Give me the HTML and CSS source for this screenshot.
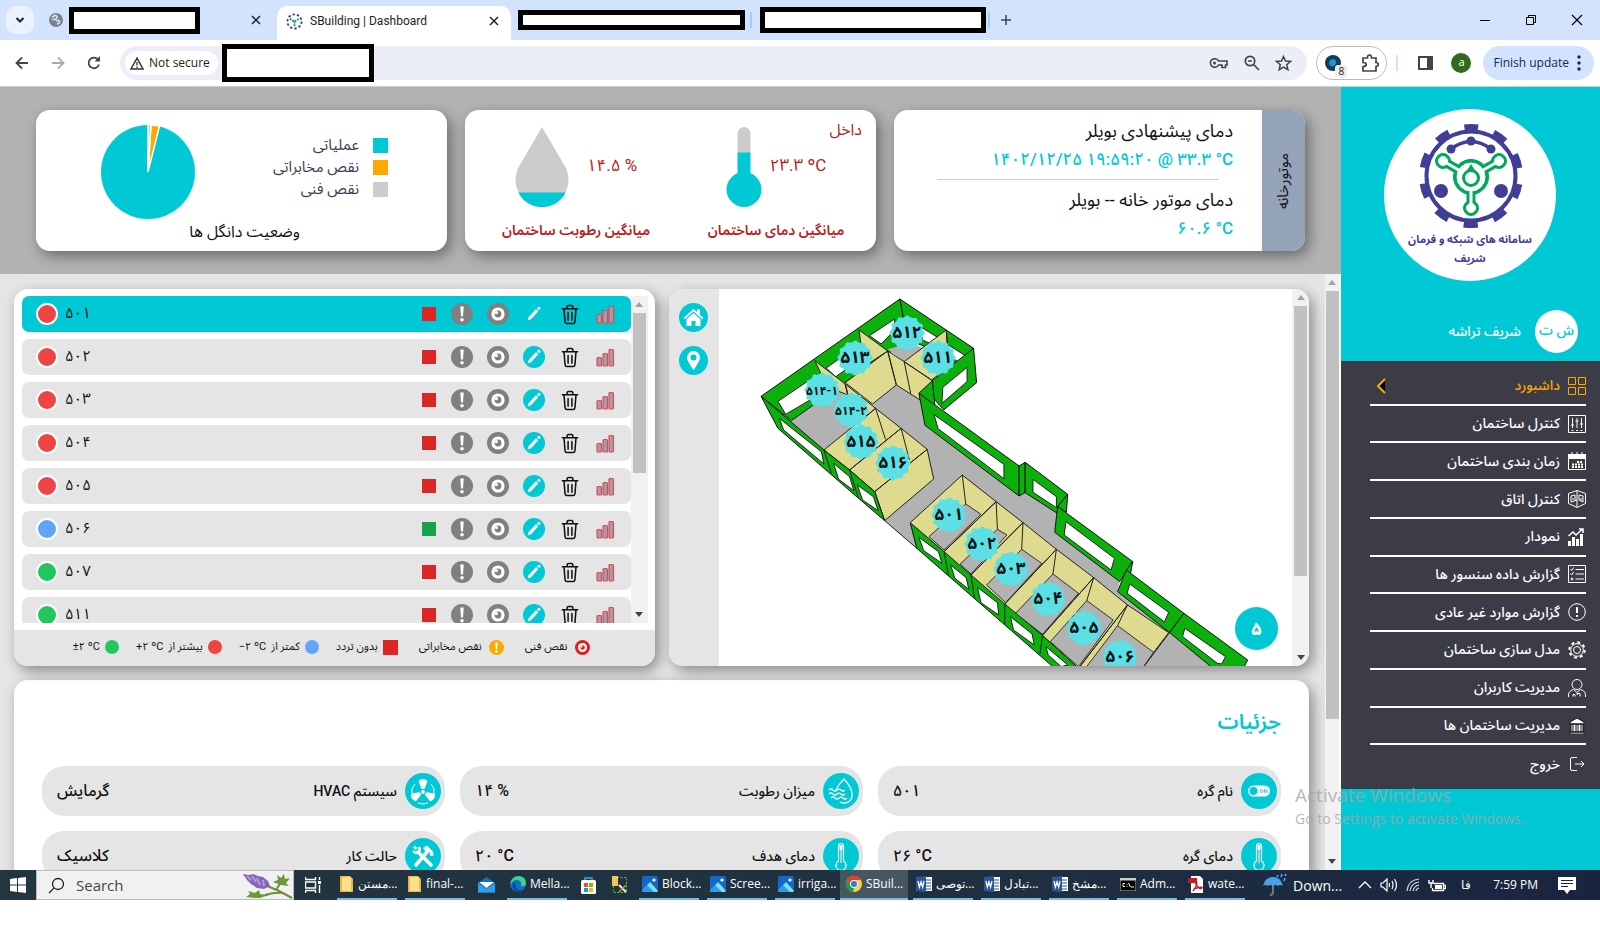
FILE: index.html
```html
<!DOCTYPE html>
<html lang="fa">
<head>
  <meta charset="UTF-8">
  <meta name="viewport" content="width=device-width, initial-scale=1.0">
  <title>SBuilding | Dashboard</title>
  <link rel="stylesheet" href="styles.css">
</head>
<body>
  <svg class="sprite" aria-hidden="true">
    <symbol id="i-close" viewBox="0 0 12 12"><path d="M2 2l8 8M10 2l-8 8" fill="none" stroke="currentColor" stroke-width="1.5"/></symbol>
    <symbol id="i-alert" viewBox="0 0 22 22"><circle cx="11" cy="11" r="11" fill="currentColor"/><path d="M9.300 3.500h3.400l-.7 10h-2z" fill="#fff"/><circle cx="11" cy="16.700" r="1.800" fill="#fff"/></symbol>
    <symbol id="i-eye" viewBox="0 0 22 22"><circle cx="11" cy="11" r="11" fill="currentColor"/><circle cx="11" cy="11" r="6.600" fill="#fff"/><circle cx="11" cy="11" r="3.400" fill="currentColor"/><circle cx="9.400" cy="9.600" r="1.600" fill="#fff"/></symbol>
    <symbol id="i-pencil" viewBox="0 0 22 22"><circle cx="11" cy="11" r="11" fill="#00c8d4"/><path d="M4.600 17.600l1-3.500 7.500-8 2.200 2.200-7.300 8zM14 5.200l1.200-1.200q.8-.6 1.600.1l.5.5q.5.7 0 1.400l-1.100 1.300z" fill="#fff"/></symbol>
    <symbol id="i-trash" viewBox="0 0 18 22"><path d="M1 5h16M6 5V3q0-1.500 1.500-1.500h3Q12 1.500 12 3v2M2.700 5l1.100 13.500q.2 2 2 2h6.400q1.800 0 2-2L15.300 5M7 9v8M11 9v8" fill="none" stroke="#111" stroke-width="1.600" stroke-linecap="round"/></symbol>
    <symbol id="i-bars" viewBox="0 0 19 19"><g fill="#94a3b8" stroke="#ef4444" stroke-width="1.200"><rect x="1" y="9.500" width="4.500" height="8.500" rx="1"/><rect x="7" y="5.500" width="4.500" height="12.500" rx="1"/><rect x="13" y="1.500" width="4.500" height="16.500" rx="1"/></g></symbol>
    <symbol id="i-up" viewBox="0 0 8 5"><path d="M0 5l4-5 4 5z" fill="currentColor"/></symbol>
    <symbol id="i-down" viewBox="0 0 8 5"><path d="M0 0l4 5 4-5z" fill="currentColor"/></symbol>
    <symbol id="i-folder" viewBox="0 0 14 18"><path d="M0 1h10l3 3v13H0z" fill="#e8b945"/><path d="M2 2h9v13l2 1H2z" fill="#ffe08a"/></symbol>
    <symbol id="i-photo" viewBox="0 0 16 16"><rect width="16" height="16" rx="2" fill="#1468c7"/><path d="M0 15l8-9 8 9-1 1H1z" fill="#7fe0f5"/><path d="M0 14l5-5 7 7H1z" fill="#2f9be8"/><circle cx="12" cy="4" r="1.600" fill="#fff"/></symbol>
    <symbol id="i-word" viewBox="0 0 16 16"><rect x="7" y="1" width="9" height="14" fill="#fff"/><path d="M10 4h5M10 7h5M10 10h5M10 13h5" stroke="#2b579a"/><path d="M0 1l10-1v16L0 15z" fill="#2b579a"/><path d="M2 5l1.400 6L5 6l1.600 5L8 5" fill="none" stroke="#fff" stroke-width="1.300"/></symbol>
    <symbol id="i-therm" viewBox="0 0 36 36"><path d="M15.500 23V8q0-2.500 2.500-2.500T20.500 8v15a5 5 0 1 1-5 0z" fill="none" stroke="#fff" stroke-width="1.200"/><path d="M16.500 7h3v5h-3z" fill="#fff"/><path d="M18 12v13" stroke="#fff" stroke-width="1"/></symbol>
  </svg>

  <!-- Browser -->
  <header class="browser">
    <div class="tab-strip">
      <button class="tab-search" aria-label="Search tabs"><svg width="10" height="8" viewBox="0 0 10 8"><path d="M1.500 2L5 5.500 8.500 2" fill="none" stroke="#222" stroke-width="2"/></svg></button>
      <div class="tab tab-first">
        <svg width="14" height="14" viewBox="0 0 14 14"><circle cx="7" cy="7" r="7" fill="#7d8086"/><path d="M3 4.500q3-3 4.500-1.500T6 6.500Q3.500 6.500 3.500 7M8 11q3-.5 2.500-2.500T7 8" fill="none" stroke="#d3e3fd" stroke-width="1.700"/></svg>
        <span class="mask mask-a"></span>
        <button class="tab-close" aria-label="Close tab"><svg width="12" height="12"><use href="#i-close"/></svg></button>
      </div>
      <div class="tab tab-active">
        <svg width="17" height="17" viewBox="0 0 18 18"><circle cx="9" cy="9" r="7.500" fill="none" stroke="#3f3f97" stroke-width="2" stroke-dasharray="2.500 2.210"/><path d="M4 6l5 3 5-3M9 9v5" fill="none" stroke="#00a859" stroke-width="2" stroke-dasharray="2 1"/></svg>
        <span class="tab-title">SBuilding | Dashboard</span>
        <button class="tab-close" aria-label="Close tab"><svg width="12" height="12"><use href="#i-close"/></svg></button>
      </div>
      <span class="mask mask-b"></span>
      <span class="tab-line"></span>
      <span class="mask mask-c"></span>
      <span class="tab-line"></span>
      <button class="new-tab" aria-label="New tab"><svg width="12" height="12" viewBox="0 0 12 12"><path d="M6 1v10M1 6h10" stroke="#444" stroke-width="1.500"/></svg></button>
      <div class="window-controls">
        <button aria-label="Minimize"><svg width="12" height="12" viewBox="0 0 12 12"><path d="M1 6.500h10" stroke="#000"/></svg></button>
        <button aria-label="Restore"><svg width="12" height="12" viewBox="0 0 12 12"><path d="M1.500 3.500h7v7h-7zM3.500 3.500v-2h7v7h-2" fill="none" stroke="#000"/></svg></button>
        <button aria-label="Close"><svg width="12" height="12" viewBox="0 0 12 12"><path d="M1 1l10 10M11 1L1 11" stroke="#000" stroke-width="1.200"/></svg></button>
      </div>
    </div>
    <div class="toolbar">
      <button aria-label="Back"><svg width="14" height="14" viewBox="0 0 14 14"><path d="M13 7H2M7 1.500L1.500 7 7 12.500" fill="none" stroke="#444" stroke-width="1.800"/></svg></button>
      <button aria-label="Forward"><svg width="14" height="14" viewBox="0 0 14 14"><path d="M1 7h11M7 1.500L12.500 7 7 12.500" fill="none" stroke="#aaa" stroke-width="1.800"/></svg></button>
      <button aria-label="Reload"><svg width="14" height="14" viewBox="0 0 14 14"><path d="M12 8.500A5.300 5.300 0 1 1 11 3.500" fill="none" stroke="#444" stroke-width="1.800"/><path d="M13 0v5.500H7.500z" fill="#444"/></svg></button>
      <div class="omnibox">
        <span class="secure"><svg width="14" height="13" viewBox="0 0 14 13"><path d="M7 1.200L13 12H1z" fill="none" stroke="#333" stroke-width="1.500"/><path d="M7 5v3.500M7 9.500V11" stroke="#333" stroke-width="1.300"/></svg>Not secure</span>
        <span class="mask mask-d"></span>
        <div class="omni-icons">
          <svg width="20" height="14" viewBox="0 0 20 14"><path d="M9.500 5H18v4h-1.500v2.500H13V9H9.500a4.300 4.300 0 1 1 0-4z" fill="none" stroke="#444" stroke-width="1.600"/><circle cx="5.500" cy="7" r="1.500" fill="#444"/></svg>
          <svg width="16" height="16" viewBox="0 0 16 16"><circle cx="6" cy="6" r="4.700" fill="none" stroke="#444" stroke-width="1.700"/><path d="M9.500 9.500L15 15M4 6h4" stroke="#444" stroke-width="1.700"/></svg>
          <svg width="17" height="16" viewBox="0 0 17 16"><path d="M8.500 1.500l2 4.600 5 .4-3.800 3.300 1.200 4.900-4.400-2.600-4.400 2.600 1.200-4.900L1.500 6.500l5-.4z" fill="none" stroke="#444" stroke-width="1.500"/></svg>
        </div>
      </div>
      <div class="extensions">
        <span class="ext-globe"><svg width="16" height="16" viewBox="0 0 16 16"><circle cx="8" cy="8" r="8" fill="#123a5e"/><path d="M4 8q0-4 5-4 3 2 2 5-3 4-5 2-2 0-2-3z" fill="#1f8fd0"/></svg><span class="ext-count">8</span></span>
        <svg width="18" height="18" viewBox="0 0 18 18"><path d="M2 4h4.500q-.2-3 2-3t2 3H15v4.500q2.300.2 2.300 2T15 12.500V17H2v-4.500q3.200 0 3.200-2T2 8.500z" fill="none" stroke="#444" stroke-width="1.700"/></svg>
      </div>
      <span class="tool-line"></span>
      <button class="side-btn" aria-label="Side panel"><svg width="15" height="14" viewBox="0 0 15 14"><rect x="1" y="1" width="13" height="12" fill="none" stroke="#444" stroke-width="2"/><path d="M9 1h5v12H9z" fill="#444"/></svg></button>
      <span class="avatar">a</span>
      <button class="finish">Finish update<svg width="4" height="16" viewBox="0 0 4 16"><g fill="#0b2a5c"><circle cx="2" cy="2" r="1.700"/><circle cx="2" cy="8" r="1.700"/><circle cx="2" cy="14" r="1.700"/></g></svg></button>
    </div>
  </header>

  <div class="app">
    <main class="main">
      <!-- Summary cards -->
      <section class="summary">
        <div class="summary-card pie-card" dir="rtl">
          <div class="pie-row">
            <ul class="pie-legend">
              <li><span class="swatch cyan"></span>عملیاتی</li>
              <li><span class="swatch amber"></span>نقص مخابراتی</li>
              <li><span class="swatch silver"></span>نقص فنی</li>
            </ul>
            <svg width="94" height="94" viewBox="-47 -47 94 94"><circle r="47" fill="#00c8d4"/><path d="M0 0L3-47 11.500-46z" fill="#ffa800" stroke="#fff" stroke-width="1.500"/><path d="M0 0V-48h3z" fill="#ccc" stroke="#fff" stroke-width="1.500"/></svg>
          </div>
          <p class="pie-caption">وضعیت دانگل ها</p>
        </div>

        <div class="summary-card average-card" dir="rtl">
          <div class="inside">داخل</div>
          <div class="averages">
            <div class="average">
              <div class="gauge">
                <bdi dir="ltr">۲۳.۳ ºC</bdi>
                <svg width="36" height="80" viewBox="0 0 36 80"><path d="M11.500 26V6.500a6.500 6.500 0 0 1 13 0V26z" fill="#ccc"/><path d="M11.500 25.500h13V50h-13z" fill="#00c8d4"/><circle cx="18" cy="62.500" r="17.500" fill="#00c8d4"/></svg>
              </div>
              <p>میانگین دمای ساختمان</p>
            </div>
            <div class="average">
              <div class="gauge gauge-drop">
                <bdi dir="ltr">۱۴.۵ %</bdi>
                <svg width="54" height="80" viewBox="0 0 54 80"><path d="M27 0L4 39.500A26.500 26.500 0 1 0 50 39.500z" fill="#ccc"/><path d="M3.300 65.500h47.400a26.500 26.500 0 0 1-47.400 0z" fill="#00c8d4"/></svg>
              </div>
              <p>میانگین رطوبت ساختمان</p>
            </div>
          </div>
        </div>

        <div class="summary-card boiler-card" dir="rtl">
          <div class="boiler-tab"><span>موتورخانه</span></div>
          <div class="boiler-body">
            <p>دمای پیشنهادی بویلر</p>
            <p class="reading"><bdi dir="ltr">۱۴۰۲/۱۲/۲۵ ۱۹:۵۹:۲۰ @ ۳۳.۳ °C</bdi></p>
            <hr>
            <p>دمای موتور خانه -- بویلر</p>
            <p class="reading"><bdi dir="ltr">۶۰.۶ °C</bdi></p>
          </div>
        </div>
      </section>

      <div class="content">
        <div class="content-body">
          <div class="panels">
            <section class="panel nodes-panel">
              <div class="nodes-scroll">
                <ul class="nodes" id="nodes"></ul>
                <div class="scrollbar">
                  <svg class="faded" width="8" height="5"><use href="#i-up"/></svg>
                  <div class="track"><div class="thumb nodes-thumb"></div></div>
                  <svg width="8" height="5"><use href="#i-down"/></svg>
                </div>
              </div>
              <div class="nodes-legend" dir="rtl">
                <span class="key-wide"><svg class="red" width="15" height="15" viewBox="0 0 22 22"><use href="#i-eye"/></svg>نقص فنی</span>
                <span class="key-wide"><svg class="orange" width="15" height="15" viewBox="0 0 22 22"><use href="#i-alert"/></svg>نقص مخابراتی</span>
                <span><i class="key-square"></i>بدون تردد</span>
                <span><i class="key-dot blue"></i>کمتر از <bdi dir="ltr">−۲ ºC</bdi></span>
                <span><i class="key-dot hot"></i>بیشتر از <bdi dir="ltr">+۲ ºC</bdi></span>
                <span><i class="key-dot green"></i><bdi dir="ltr">±۲ ºC</bdi></span>
              </div>
            </section>

            <section class="panel map-panel">
              <div class="map-tools">
                <button aria-label="Home"><svg width="29" height="29" viewBox="0 0 29 29"><circle cx="14.500" cy="14.500" r="14.500" fill="#00c8d4"/><path d="M4.500 15L14.500 6l3.500 3V6.500h3V12l3.500 3-1.300 1.300L14.500 8.500 5.800 16.300z" fill="#fff"/><path d="M7.500 16.300l7-6.200 7 6.200V23H16.500v-5h-4v5h-5z" fill="#fff"/></svg></button>
                <button aria-label="Location"><svg width="29" height="29" viewBox="0 0 29 29"><circle cx="14.500" cy="14.500" r="14.500" fill="#00c8d4"/><path fill-rule="evenodd" d="M14.500 24Q8 15 8 11.500a6.500 6.500 0 0 1 13 0Q21 15 14.500 24zm0-9.500a3 3 0 1 0 0-6 3 3 0 0 0 0 6z" fill="#fff"/></svg></button>
              </div>
              <div class="map-view">
                <svg class="map" width="573" height="377" viewBox="0 0 573 377">
                  <g class="plan" transform="translate(-59 -9) scale(.4337 .3333)">
                    <path class="floor" d="M300 425L400 318 433 312 490 372 545 315 600 355 611 436 828 648 842 638 916 695 910 757 1060 905 1055 935 1175 1058 1275 1160H915L592 805 518 722 378 510z"/>
                    <path class="ext" d="M553 57L233 349 303 422 440 295 575 180 561 110z"/>
                    <path class="ext" d="M553 57L723 205 690 255 620 205 575 180 561 110z"/>
                    <path class="pane" d="M272 364L362 285 385 330 290 403zM383 264L445 208 455 245 405 290zM483 167L541 117V150L510 192zM600 140L654 183 640 200 605 180zM665 195L705 228 690 248 665 225z"/>
                    <path class="floor" d="M525 208L575 190 610 205 563 245z"/>
                    <path class="room" d="M459 150L525 213 470 260zM525 213L545 315 490 372 427 308zM525 213L563 245 628 302 600 340V360L545 315zM660 150L563 245 626 300 665 262zM357 242L427 312 433 345 385 320z"/>
                    <path class="room" d="M427 312L497 385 470 415 433 345zM497 385L378 510 437 570 556 445zM556 445L437 570 495 635 616 508zM616 508L631 597 518 722 495 635z"/>
                    <path class="edge" d="M563 245L578 340M660 150L663 190M497 385L520 478M556 445L575 540M427 312L433 340"/>
                    <path class="ext" d="M723 205L730 308 654 390 628 350V302z"/>
                    <path class="pane" d="M652 322L708 262V305L650 370z"/>
                    <path class="ext" d="M233 349L378 510 437 570 495 635 518 722 455 652 272 445z"/>
                    <path class="edge" d="M378 510L395 580M437 570L457 652"/>
                    <path class="pane" d="M275 415L372 515 378 552 285 450zM400 550L437 590 447 632 412 598zM455 615L492 650 503 692 467 660z"/>
                    <path class="ext" d="M597 340L628 302 634 378z"/>
                    <path class="ext" d="M597 340L828 558V648L611 436z"/>
                    <path class="ext" d="M828 558L842 547V638L828 648z"/>
                    <path class="ext" d="M842 547L940 643 917 680 916 700 842 638z"/>
                    <path class="ext" d="M940 643L937 697 917 680z"/>
                    <path class="ext" d="M917 680L1090 845 1060 905 910 757z"/>
                    <path class="ext" d="M1075 870L1090 845 1085 880z"/>
                    <path class="ext" d="M1075 870L1208 1000 1175 1058 1055 935z"/>
                    <path class="ext" d="M1208 1000L1355 1140 1345 1165H1275L1175 1058z"/>
                    <path class="pane" d="M632 404L793 553V596L641 446zM860 598L914 650V683L860 637zM936 725L1048 835 1040 870 932 765zM1083 912L1173 997 1163 1026 1077 940zM1210 1045L1304 1130 1295 1152 1285 1150 1205 1070z"/>
                    <path class="ext" d="M577 728L882 1066 965 1165H910L592 805z"/>
                    <path class="edge" d="M655 815L665 887M717 885L725 954M795 972V1032M882 1066L876 1122"/>
                    <path class="pane" d="M597 772L642 815 650 850 608 812zM670 855L706 893 712 928 680 895zM732 922L778 968 781 1005 740 968zM808 1010L858 1062 863 1095 815 1050zM890 1100L940 1155 925 1160 895 1125z"/>
                    <path class="room" d="M697 585L577 728 655 815 775 665zM775 665L655 815 717 885 837 728zM837 728L717 885 795 972 914 808zM914 808L795 972 882 1066 1000 893zM1000 893L882 1066 965 1165 1078 975zM1078 975L965 1165H1110L1173 1058z"/>
                    <path class="tile" d="M705 672L740 703 655 810 620 770zM778 748L800 765 717 882 692 852zM834 808L880 850 797 968 753 915zM906 882L965 940 882 1063 820 1000zM984 962L1045 1020 965 1160 900 1085zM1055 1037L1138 1117 1110 1170H978z"/>
                    <path class="edge" d="M697 585L705 672M775 665L778 748M837 728L834 808M914 808L906 882M1000 893L984 962M1078 975L1055 1037M1208 1000L1110 1170M518 722L592 805"/>
                  </g>
                  <g id="badges"></g>
                </svg>
                <button class="floor-btn">۵</button>
              </div>
              <div class="scrollbar">
                <svg class="faded" width="8" height="5"><use href="#i-up"/></svg>
                <div class="track"><div class="thumb map-thumb"></div></div>
                <svg width="8" height="5"><use href="#i-down"/></svg>
              </div>
            </section>
          </div>

          <section class="details" dir="rtl">
            <h2>جزئیات</h2>
            <dl class="detail-grid">
              <div class="detail">
                <svg width="36" height="36" viewBox="0 0 36 36"><circle cx="18" cy="18" r="18" fill="#00c8d4"/><rect x="7" y="12.500" width="22" height="11" rx="5.500" fill="#fff"/><circle cx="12.500" cy="18" r="4" fill="#00c8d4"/><circle cx="20.500" cy="18" r="1.500" fill="none" stroke="#00c8d4" stroke-width=".8"/><path d="M23.500 19.800v-3.500l2.500 3.500v-3.500" fill="none" stroke="#00c8d4" stroke-width=".8"/></svg>
                <dt>نام گره</dt><dd><bdi>۵۰۱</bdi></dd>
              </div>
              <div class="detail">
                <svg width="36" height="36" viewBox="0 0 36 36"><circle cx="18" cy="18" r="18" fill="#00c8d4"/><path d="M13 17Q15 12 21 6q8 9 8 15a8 8 0 0 1-12 8M6 17q2-2 4 0t4 0 4 0 4 0M6 21q2-2 4 0t4 0 4 0 4 0M8 25q2-2 4 0t4 0 4 0 4 0" fill="none" stroke="#fff" stroke-width="1.200"/></svg>
                <dt>میزان رطوبت</dt><dd><bdi dir="ltr">۱۴ %</bdi></dd>
              </div>
              <div class="detail">
                <svg width="36" height="36" viewBox="0 0 36 36"><circle cx="18" cy="18" r="18" fill="#00c8d4"/><g fill="#fff"><circle cx="18" cy="19" r="2"/><path id="blade" d="M16.500 16l-3-8q4.500-4 9 0l-3 8z"/><use href="#blade" transform="rotate(120 18 19)"/><use href="#blade" transform="rotate(240 18 19)"/></g><path d="M26 11q4 4 3 9M10 11q-4 4-3 9M13 30q5 2 10 0" fill="none" stroke="#fff"/></svg>
                <dt>سیستم HVAC</dt><dd>گرمایش</dd>
              </div>
              <div class="detail">
                <svg width="36" height="36"><circle cx="18" cy="18" r="18" fill="#00c8d4"/><use href="#i-therm"/></svg>
                <dt>دمای گره</dt><dd><bdi dir="ltr">۲۶ °C</bdi></dd>
              </div>
              <div class="detail">
                <svg width="36" height="36"><circle cx="18" cy="18" r="18" fill="#00c8d4"/><use href="#i-therm"/></svg>
                <dt>دمای هدف</dt><dd><bdi dir="ltr">۲۰ °C</bdi></dd>
              </div>
              <div class="detail">
                <svg width="36" height="36" viewBox="0 0 36 36"><circle cx="18" cy="18" r="18" fill="#00c8d4"/><path d="M13 14L26 27M11 27L22 14" stroke="#fff" stroke-width="3.500" stroke-linecap="round"/><path d="M18 10l4-2.500 6 6 .5 4-3 .5-1-4-3 .5z" fill="#fff"/><path d="M9 8.500l2.500 2.500M14 9q1.500 4-1 5.500T8 13" fill="none" stroke="#fff" stroke-width="2.500"/></svg>
                <dt>حالت کار</dt><dd>کلاسیک</dd>
              </div>
            </dl>
          </section>
        </div>
        <div class="scrollbar page-scroll">
          <svg class="faded" width="8" height="5"><use href="#i-up"/></svg>
          <div class="track"><div class="thumb page-thumb"></div></div>
          <svg width="8" height="5"><use href="#i-down"/></svg>
        </div>
      </div>
    </main>

    <!-- Sidebar -->
    <aside class="sidebar" dir="rtl">
      <div class="logo">
        <svg width="108" height="106" viewBox="-55 -52 108 106">
          <g fill="none" stroke="#3f3f97">
            <circle r="44.500" stroke-width="4"/>
            <circle r="48" stroke-width="8" stroke-dasharray="14 16.160" stroke-dashoffset="7" transform="rotate(-90)"/>
            <path d="M-20-27Q0-42 20-27" stroke-width="3.500"/>
          </g>
          <g fill="#3f3f97"><circle cx="-20" cy="-27" r="4.500"/><circle cy="-35" r="4.500"/><circle cx="20" cy="-27" r="4.500"/><circle cx="-30" cy="15" r="7"/><circle cx="30" cy="15" r="7"/></g>
          <g fill="#00a859" stroke="#00a859"><path d="M0 1L-28-15M0 1L28-15M0 1V32" stroke-width="9"/><circle cy="1" r="17.500"/><circle cx="-28" cy="-15" r="7.500"/><circle cx="28" cy="-15" r="7.500"/><circle cy="32" r="7.500"/></g>
          <g fill="#fff" stroke="#fff"><path d="M0 1L-28-15M0 1L28-15M0 1V32" stroke-width="3"/><circle cy="1" r="14"/><circle cx="-28" cy="-15" r="4.500"/><circle cx="28" cy="-15" r="4.500"/><circle cy="32" r="4.500"/></g>
          <circle cy="2" r="7.500" fill="none" stroke="#00a859" stroke-width="3"/><path d="M0-12L-5-4H5z" fill="#00a859"/>
        </svg>
        <strong>سامانه های شبکه و فرمان</strong>
        <strong>شریف</strong>
      </div>
      <div class="profile">
        <span class="initials">ش ت</span>
        <span>شریف تراشه</span>
      </div>
      <nav class="menu">
        <a href="#" class="active"><svg width="18" height="18" viewBox="0 0 18 18"><path d="M.5.500h7v7h-7zM10.500.500h7v7h-7zM.5 10.500h7v7h-7zM10.500 10.500h7v7h-7z"/></svg>داشبورد<svg class="caret" width="9" height="16" viewBox="0 0 9 16"><path d="M8 1L1 8l7 7z" fill="#000" stroke="none"/><path d="M8 1L1 8l7 7" stroke-width="2"/></svg></a>
        <a href="#"><svg width="18" height="18" viewBox="0 0 18 18"><path d="M.5.500h17v17H.5zM4.500 3v10M9 3v10M13.500 3v10M3 10h3M7.500 6h3M12 9h3M3.500 15.500h2M8 15.500h2M12.500 15.500h2"/></svg>کنترل ساختمان</a>
        <a href="#"><svg width="18" height="18" viewBox="0 0 18 18"><path d="M.5 2.500h17v15H.5zM4 0v4M9 0v4M14 0v4"/><path d="M.5 2.500h17v4H.5z" fill="#fff"/><path d="M4 15h11M4 12.500h11M9 10h6" stroke-width="2" stroke-dasharray="2 1"/></svg>زمان بندی ساختمان</a>
        <a href="#"><svg width="18" height="18" viewBox="0 0 18 18"><path d="M9 .5l8.500 3v10L9 17.500l-8.500-4v-10zM9 10v7M9 10l-6 2V6l4-1v5.500M11 10V5l4 1v6l-4-2M9 .5V10M5 8v2M13 8v3"/></svg>کنترل اتاق</a>
        <a href="#"><svg width="18" height="18" viewBox="0 0 18 18"><path d="M0 13h3v5H0zM4 9h3v9H4zM8 11h3v7H8zM12 6h3v12h-3z" fill="#fff" stroke="none"/><path d="M.5 8L5 4l3 3 6.500-6M11 1h4v4" stroke-width="1.500"/></svg>نمودار</a>
        <a href="#"><svg width="18" height="18" viewBox="0 0 18 18"><path d="M.5.500h17v17H.5zM2.500 4l1.200 1.500 2-3M2.500 8.500L3.700 10l2-3M7.500 4.500H16M7.500 9H16M7.500 14H16"/><circle cx="4" cy="14" r="1"/></svg>گزارش داده سنسور ها</a>
        <a href="#"><svg width="18" height="18" viewBox="0 0 18 18"><circle cx="9" cy="9" r="8.300"/><path d="M9 4v6M9 12v2" stroke-width="2"/></svg>گزارش موارد غیر عادی</a>
        <a href="#"><svg width="18" height="18" viewBox="0 0 18 18"><circle cx="9" cy="9" r="3.500"/><circle cx="9" cy="9" r="6.300"/><circle cx="9" cy="9" r="7.700" stroke-width="2" stroke-dasharray="3 3.050"/></svg>مدل سازی ساختمان</a>
        <a href="#"><svg width="18" height="18" viewBox="0 0 18 18"><circle cx="9" cy="5.500" r="5"/><path d="M.5 18v-2q0-4 5-5.500l3.500 3 3.500-3q5 1.500 5 5.500v2M5 17.500v-2h2v2M9 16v-1.500h3v3"/></svg>مدیریت کاربران</a>
        <a href="#"><svg width="18" height="18" viewBox="0 0 18 18"><path d="M2 6l7-4 7 4v2H2zM2 16h14v2H2zM3 8h12v8H3z" fill="#fff" stroke="#111"/><path d="M5 8v8M8 8v8M10 8v8M13 8v8" stroke="#111"/></svg>مدیریت ساختمان ها</a>
        <a href="#"><svg width="18" height="18" viewBox="0 0 18 18"><path d="M9 2.500H4q-1.500 0-1.500 1.500v10q0 1.500 1.500 1.500h5M7 9h9M13 6l3 3-3 3"/></svg>خروج</a>
      </nav>
    </aside>

    <div class="watermark"><p>Activate Windows</p><span>Go to Settings to activate Windows.</span></div>
  </div>

  <!-- Taskbar -->
  <footer class="taskbar">
    <button class="start" aria-label="Start"><svg width="16" height="16" viewBox="0 0 16 16"><path d="M0 2l7-1v6.500H0zM8 1l8-1v7.500H8zM0 8.500h7V15l-7-1zM8 8.500h8V16l-8-1z" fill="#fff"/></svg></button>
    <label class="search"><svg width="17" height="17" viewBox="0 0 17 17"><circle cx="10" cy="7" r="5.500" fill="none" stroke="#222" stroke-width="1.300"/><path d="M6 11l-5 5" stroke="#222" stroke-width="1.300"/></svg>
      <input type="text" placeholder="Search" aria-label="Search">
      <svg width="50" height="27" viewBox="0 0 50 27"><path d="M22 13l14 6 13 7M22 23q10-3 18-2M33 18l5-8" fill="none" stroke="#6b8f3a" stroke-width="2"/><path d="M0 2l6 1 4-1 5 2 5 1 5 4 2 5-6 3-7-1-6-4-4-4z" fill="#8864b8"/><path d="M4 4l4 4M9 4l4 6M14 6l3 7M20 8l1 6" stroke="#b69bd8" stroke-width="2"/><path d="M38 13l-8-3 5-2-1-5 4 3 3-4 1 5 5-1-4 5 3 3zM12 26l-9-1 4-3-2-3 7 2 4-3 1 4 9 1-9 3z" fill="#6a9a35"/></svg>
    </label>
    <button class="task-icon view" aria-label="Task view"><svg width="17" height="16" viewBox="0 0 17 16"><path d="M.5 0v2.500h10V0M.5 16v-2.500h10V16M.5 5h10v6H.5zM14.500 0v3M14.500 8v8" fill="none" stroke="#fff" stroke-width="1.400"/><path d="M13 4h3v3h-3z" fill="#fff"/></svg></button>
    <button class="task"><svg width="14" height="18"><use href="#i-folder"/></svg><span>مستن...</span></button>
    <button class="task"><svg width="14" height="18"><use href="#i-folder"/></svg><span>final-...</span></button>
    <button class="task-icon" aria-label="Mail"><svg width="17" height="16" viewBox="0 0 17 16"><path d="M0 6l8.500-6L17 6v9.500H0z" fill="#1271c4"/><path d="M1 5h15l-7.500 6z" fill="#fff"/><path d="M0 6l8.500 6L17 6v9.500H0z" fill="#2ea0ea"/></svg></button>
    <button class="task"><svg width="16" height="16" viewBox="0 0 16 16"><circle cx="8" cy="8" r="8" fill="#1170c0"/><path d="M1 5Q4 0 9 0q7 1 7 7 0 4-5 3 1-6-4-6-4 0-6 4z" fill="#42cf8b"/><path d="M6 8q-1 5 4 6l4-1q-4 5-9 2-5-5-1-9z" fill="#0c4d9e"/></svg><span>Mella...</span></button>
    <button class="task-icon" aria-label="Store"><svg width="15" height="17" viewBox="0 0 15 17"><path d="M4 4V1h7v3" fill="none" stroke="#35a7e8" stroke-width="1.500"/><rect y="3" width="15" height="14" rx="1.500" fill="#fff"/><path d="M3 6h4v4H3z" fill="#f25022"/><path d="M8 6h4v4H8z" fill="#7fba00"/><path d="M3 11h4v4H3z" fill="#00a4ef"/><path d="M8 11h4v4H8z" fill="#ffb900"/></svg></button>
    <button class="task-icon slim" aria-label="Tools"><svg width="16" height="18" viewBox="0 0 16 18"><path d="M1.500 1.500h13v15h-13z" fill="none" stroke="#5cc030" stroke-dasharray="2 1.500"/><path d="M0 0h6v10H0z" fill="#f3c74d"/><path d="M7 9l7 7" stroke="#eee" stroke-width="2"/><path d="M14 9l-7 7" stroke="#c98c3e" stroke-width="1.500"/></svg></button>
    <button class="task"><svg width="16" height="16"><use href="#i-photo"/></svg><span>Block...</span></button>
    <button class="task"><svg width="16" height="16"><use href="#i-photo"/></svg><span>Scree...</span></button>
    <button class="task"><svg width="16" height="16"><use href="#i-photo"/></svg><span>irriga...</span></button>
    <button class="task current"><svg width="16" height="16" viewBox="-8 -8 16 16"><circle r="8" fill="#ffcd40"/><path d="M-7-4A8 8 0 0 1 7-4H0a4 4 0 0 0-3.500 6z" fill="#e33b2e"/><path d="M-7-4l4 6q1 2 3 2l-1 4A8 8 0 0 1-7-4z" fill="#1a9c50"/><circle r="3.700" fill="#2f7de1" stroke="#fff"/></svg><span>SBuil...</span></button>
    <button class="task"><svg width="16" height="16"><use href="#i-word"/></svg><span>توصی...</span></button>
    <button class="task"><svg width="16" height="16"><use href="#i-word"/></svg><span>تبادل...</span></button>
    <button class="task"><svg width="16" height="16"><use href="#i-word"/></svg><span>مشخ...</span></button>
    <button class="task"><svg width="16" height="13" viewBox="0 0 16 13"><rect width="16" height="13" fill="#000" stroke="#bbb"/><path d="M0 0h16v2.500H0z" fill="#ccc"/><path d="M5 5.500H3v3h2M7 6v.7M7 8v.7M8.500 5l2 4M11 9h3" fill="none" stroke="#fff"/></svg><span>Adm...</span></button>
    <button class="task"><svg width="16" height="17" viewBox="0 0 16 17"><path d="M3 0h9l3 3v14H3z" fill="#fff"/><path d="M0 2h9v5H0z" fill="#c11e1e"/><path d="M5 15q6-8 3-9-2 0 1 4t5 2q1-2-8 1z" fill="none" stroke="#c11e1e" stroke-width="1.300"/></svg><span>wate...</span></button>
    <div class="tray">
      <span class="weather"><svg width="24" height="24" viewBox="0 0 24 24"><path d="M10 5v14q0 3-3 3" fill="none" stroke="#777" stroke-width="2"/><path d="M0 13Q2 4 10 4t10 9q-3-2-5 0-2-2-5 0-3-2-5 0-3-2-5 0z" fill="#4a9fe8"/><path d="M15 2l-1 2M19 1l-1 3M22 5l-1 3M23 1l-1 2" stroke="#5ab0f5" stroke-width="1.500"/></svg>Down...</span>
      <svg width="14" height="8" viewBox="0 0 14 8"><path d="M1 7l6-6 6 6" fill="none" stroke="#fff" stroke-width="1.300"/></svg>
      <svg width="18" height="14" viewBox="0 0 18 14"><path d="M1 5h2l4-4v12L3 9H1zM9 5q1 2 0 4M12 3q2 4 0 8M14.500 1q4 6 0 12" fill="none" stroke="#fff" stroke-width="1.200"/></svg>
      <svg width="14" height="14" viewBox="0 0 14 14"><path d="M1 13Q2 2 13 1M4 13q1-8 9-9M7 13q1-5 6-6M10 13q0-2 3-3" fill="none" stroke="#ddd" stroke-width="1.200"/></svg>
      <svg width="18" height="13" viewBox="0 0 18 13"><path d="M5.500 4.500h10v7h-11V9M16 6.500h1.500v3H16" fill="none" stroke="#fff" stroke-width="1.300"/><path d="M7 6h7v4H7z" fill="#fff"/><path d="M1 1v3h4V1M3 4v5" fill="none" stroke="#fff" stroke-width="1.400"/></svg>
      <span class="lang">فا</span>
      <span class="clock">7:59 PM</span>
      <svg width="18" height="17" viewBox="0 0 18 17"><path d="M0 0h18v13h-6l-3 4-3-4H0z" fill="#fff"/><path d="M3 3.500h12M3 6.500h12M3 9.500h7" stroke="#1b2a44"/></svg>
    </div>
  </footer>

  <script>
    const nodes = [
      { name: '۵۰۱', state: 'hot', active: true },
      { name: '۵۰۲', state: 'hot' },
      { name: '۵۰۳', state: 'hot' },
      { name: '۵۰۴', state: 'hot' },
      { name: '۵۰۵', state: 'hot' },
      { name: '۵۰۶', state: 'blue', present: true },
      { name: '۵۰۷', state: 'green' },
      { name: '۵۱۱', state: 'green' }
    ];

    // Room badges on the floor plan
    const rooms = [
      ['۵۱۲', 188, 44], ['۵۱۳', 136, 69], ['۵۱۱', 219, 69],
      ['۵۱۴-۱', 103, 101], ['۵۱۴-۲', 132, 121], ['۵۱۵', 142, 153],
      ['۵۱۶', 174, 174], ['۵۰۱', 230, 226], ['۵۰۲', 263, 255],
      ['۵۰۳', 292, 280], ['۵۰۴', 329, 310], ['۵۰۵', 365, 339], ['۵۰۶', 401, 368]
    ];

    document.getElementById('nodes').innerHTML = nodes.map(node => `
      <li class="node ${node.active ? 'selected' : ''}">
        <span class="dot ${node.state}"></span>
        <span class="node-name">${node.name}</span>
        <span class="presence ${node.present ? 'present' : ''}"></span>
        <span class="cell"><svg width="22" height="22"><use href="#i-alert"/></svg></span>
        <span class="cell"><svg width="22" height="22"><use href="#i-eye"/></svg></span>
        <button class="cell" aria-label="Edit"><svg width="22" height="22"><use href="#i-pencil"/></svg></button>
        <button class="cell" aria-label="Delete"><svg width="18" height="21"><use href="#i-trash"/></svg></button>
        <span class="cell"><svg width="19" height="19"><use href="#i-bars"/></svg></span>
      </li>
    `).join('');

    document.getElementById('badges').innerHTML = rooms.map(([label, x, y]) => `
      <circle class="badge" cx="${x}" cy="${y}" r="16"></circle>
      <circle class="badge-rim" cx="${x}" cy="${y}" r="15"></circle>
      <text class="${label.length > 3 ? 'small' : ''}" x="${x}" y="${y + 5}">${label}</text>
    `).join('');
  </script>
</body>
</html>
```
FILE: styles.css
```css
:root {
  --cyan: #00c8d4;
  --dark: #3b3c46;
  --panel: #e5e5e5;
  --red: #dc2626;
  --hot: #ef4444;
  --blue: #60a5fa;
  --green: #22c55e;
  --ui: "Open Sans", "Noto Sans", sans-serif;
  --shadow: 4px 5px 14px rgba(0, 0, 0, 0.4);
}

* {
  box-sizing: border-box;
  margin: 0;
  padding: 0;
}

body {
  display: flex;
  flex-direction: column;
  height: 100vh;
  padding-bottom: 30px;
  overflow: hidden;
  background: #fff;
  color: #111;
  font-family: Roboto, "Noto Sans Arabic", "DejaVu Sans", sans-serif;
  font-size: 15px;
  line-height: 1.5;
}

button {
  display: flex;
  align-items: center;
  justify-content: center;
  border: none;
  background: none;
  color: inherit;
  font: inherit;
  cursor: pointer;
}

svg {
  display: block;
  flex-shrink: 0;
}

ul {
  list-style: none;
}

.sprite {
  position: absolute;
  width: 0;
  height: 0;
}

/* Browser */
.browser {
  font-family: var(--ui);
  font-size: 12px;
  color: #222;
  border-bottom: 1px solid #ccc;
}

.tab-strip {
  display: flex;
  align-items: center;
  height: 40px;
  padding-left: 6px;
  background: #d3e3fd;
}

.tab-search {
  width: 28px;
  height: 28px;
  border-radius: 10px;
  background: #ebf2fe;
}

.tab {
  display: flex;
  align-items: center;
}

.tab-first {
  width: 243px;
  padding: 0 15px;
  gap: 6px;
}

.tab-close {
  margin-left: auto;
}

.tab-active {
  align-self: flex-end;
  width: 234px;
  height: 34px;
  padding: 0 11px 4px 9px;
  gap: 7px;
  border-radius: 10px 10px 0 0;
  background: #fff;
}

.tab-title {
  font-family: Roboto, sans-serif;
  font-size: 12px;
}

.mask {
  border: 5px solid #000;
  background: #fff;
}

.mask-a {
  width: 131px;
  height: 27px;
}

.mask-b {
  width: 227px;
  height: 20px;
  margin-left: 7px;
}

.mask-c {
  width: 226px;
  height: 26px;
}

.mask-d {
  width: 152px;
  height: 38px;
}

.tab-line {
  width: 2px;
  height: 16px;
  margin: 0 8px 0 5px;
  background: #a8c7fa;
}

.mask-c + .tab-line {
  margin: 0 10px 0 2px;
}

.window-controls {
  display: flex;
  margin-left: auto;
}

.window-controls button {
  width: 46px;
  height: 40px;
}

.toolbar {
  display: flex;
  align-items: center;
  height: 46px;
  padding: 0 6px 0 4px;
}

.toolbar > button:not(.finish) {
  width: 36px;
  height: 34px;
}

.omnibox {
  display: flex;
  flex: 1;
  align-items: center;
  gap: 4px;
  height: 34px;
  margin-left: 8px;
  padding: 0 15px 0 5px;
  border-radius: 17px;
  background: #ebeef7;
}

.secure {
  display: flex;
  align-items: center;
  gap: 5px;
  height: 24px;
  padding: 0 8px 0 5px;
  border-radius: 12px;
  background: #fff;
}

.omni-icons {
  display: flex;
  align-items: center;
  gap: 15px;
  margin-left: auto;
}

.extensions {
  display: flex;
  align-items: center;
  gap: 18px;
  height: 34px;
  margin-left: 9px;
  padding: 0 7px 0 8px;
  border: 1px solid #bbb;
  border-radius: 17px;
}

.ext-globe {
  position: relative;
  margin-right: 2px;
}

.ext-count {
  position: absolute;
  right: -6px;
  bottom: -7px;
  width: 12px;
  border-radius: 3px;
  background: #eee;
  font-size: 10px;
  line-height: 13px;
  text-align: center;
}

.tool-line {
  width: 2px;
  height: 16px;
  margin: 0 9px;
  background: #d3e3fd;
}

.avatar {
  width: 20px;
  height: 20px;
  margin: 0 12px 0 8px;
  border-radius: 50%;
  background: #33691e;
  color: #fff;
  font-size: 11px;
  line-height: 18px;
  text-align: center;
}

.finish {
  gap: 8px;
  height: 34px;
  padding: 0 13px 0 10px;
  border-radius: 17px;
  background: #d3e3fd;
  color: #0b2a5c;
  font-size: 12px;
  white-space: nowrap;
}

/* App */
.app {
  position: relative;
  display: flex;
  flex: 1;
  min-height: 0;
}

.main {
  display: flex;
  flex: 1;
  flex-direction: column;
  min-width: 0;
}

.summary {
  display: grid;
  grid-template-columns: repeat(3, 1fr);
  gap: 18px;
  padding: 23px 36px;
  background: #b2b2b2;
}

.summary-card {
  height: 141px;
  border-radius: 14px;
  background: #fff;
  box-shadow: var(--shadow);
  overflow: hidden;
}

.pie-card {
  padding: 15px 59px 0 65px;
}

.pie-row {
  display: flex;
  justify-content: space-between;
}

.pie-legend {
  padding-top: 9px;
  color: #374151;
}

.pie-legend li {
  display: flex;
  align-items: center;
  gap: 14px;
  height: 22px;
}

.swatch {
  width: 15px;
  height: 15px;
}

.cyan {
  background: var(--cyan);
}

.amber {
  background: #ffa800;
}

.silver {
  background: #ccc;
}

.pie-caption {
  font-size: 16px;
  line-height: 26px;
  text-align: center;
}

.average-card {
  padding: 8px 0 8px 11px;
  color: #b91c1c;
}

.inside {
  height: 9px;
  padding-right: 14px;
  font-size: 16px;
}

.averages {
  display: grid;
  grid-template-columns: 1fr 1fr;
}

.average {
  display: flex;
  flex-direction: column;
  align-items: center;
}

.gauge {
  display: flex;
  gap: 8px;
  height: 90px;
  font-size: 17px;
  line-height: 76px;
}

.gauge-drop {
  gap: 18px;
}

.average p {
  font-size: 14px;
  font-weight: 600;
  line-height: 26px;
  white-space: nowrap;
}

.boiler-card {
  display: flex;
}

.boiler-tab {
  display: flex;
  align-items: center;
  justify-content: center;
  width: 43px;
  background: #94a3b8;
}

.boiler-tab span {
  writing-mode: vertical-rl;
  transform: rotate(180deg);
  font-size: 15px;
}

.boiler-body {
  flex: 1;
  padding: 6px 29px 0 43px;
  font-size: 18px;
  line-height: 29px;
}

.boiler-body hr {
  height: 1px;
  margin: 5px 14px 5px 0;
  border: none;
  background: #cbd0da;
}

.boiler-body .reading {
  color: var(--cyan);
  font-size: 17px;
  font-weight: 500;
}

.content {
  display: flex;
  flex: 1;
  min-height: 0;
  background: var(--panel);
}

.content-body {
  flex: 1;
  padding: 15px 16px 0 14px;
  overflow: hidden;
}

.panels {
  display: grid;
  grid-template-columns: 1fr 1fr;
  gap: 14px;
  margin-bottom: 14px;
}

.panel {
  height: 377px;
  border-radius: 14px;
  background: #fff;
  box-shadow: var(--shadow);
  overflow: hidden;
}

.scrollbar {
  display: flex;
  flex-direction: column;
  align-items: center;
  width: 17px;
  padding: 6px 2px;
  background: #f1f1f1;
  color: #444;
}

.faded {
  color: #a3a3a3;
}

.track {
  flex: 1;
  width: 13px;
  margin: 6px 0;
}

.thumb {
  background: #c1c1c1;
}

.nodes-thumb {
  height: 160px;
}

.map-thumb {
  height: 270px;
}

.page-thumb {
  height: 428px;
}

.page-scroll {
  width: 16px;
  border-right: 2px solid #fff;
}

/* Node list */
.nodes-panel {
  display: flex;
  flex-direction: column;
}

.nodes-scroll {
  display: flex;
  height: 327px;
  margin: 7px 7px 7px 8px;
}

.nodes {
  flex: 1;
  overflow: hidden;
}

.node {
  display: flex;
  align-items: center;
  height: 36px;
  margin-bottom: 7px;
  padding: 0 7px 0 14px;
  border-radius: 7px;
  background: var(--panel);
}

.node.selected {
  background: var(--cyan);
}

.dot {
  width: 22px;
  height: 22px;
  border: 2px solid #fff;
  border-radius: 50%;
}

.hot {
  background: var(--hot);
}

.blue {
  background: var(--blue);
}

.green {
  background: var(--green);
}

.node-name {
  flex: 1;
  padding: 0 0 2px 7px;
  font-size: 15px;
}

.presence {
  width: 14px;
  height: 14px;
  margin-right: 8px;
  background: var(--red);
}

.presence.present {
  background: #16a34a;
}

.cell {
  display: flex;
  align-items: center;
  justify-content: center;
  width: 36px;
  color: #808080;
}

.nodes-legend {
  display: flex;
  flex: 1;
  align-items: center;
  gap: 17px;
  padding: 0 65px 2px 0;
  background: var(--panel);
  font-size: 11px;
  white-space: nowrap;
}

.nodes-legend > span {
  display: flex;
  align-items: center;
  gap: 5px;
}

.nodes-legend > .key-wide {
  gap: 7px;
  margin-left: 4px;
}

.nodes-legend .red {
  color: #e11d1d;
}

.nodes-legend .orange {
  color: #ffa800;
}

.key-square {
  width: 15px;
  height: 15px;
  background: var(--red);
}

.key-dot {
  width: 14px;
  height: 14px;
  border-radius: 50%;
}

/* Floor plan */
.map-panel {
  display: flex;
}

.map-tools {
  display: flex;
  flex-direction: column;
  align-items: center;
  gap: 14px;
  width: 50px;
  padding-top: 14px;
  background: var(--panel);
}

.map-view {
  position: relative;
  flex: 1;
  overflow: hidden;
}

.plan path {
  vector-effect: non-scaling-stroke;
  stroke-linejoin: round;
}

.plan .floor {
  fill: #b2b2b2;
}

.plan .tile {
  fill: #b2b2b2;
  stroke: #333;
}

.plan .ext {
  fill: #0bb00b;
  stroke: #111;
}

.plan .pane {
  fill: #fff;
  stroke: #222;
}

.plan .room {
  fill: #dedb8e;
  stroke: #222;
}

.plan .edge {
  fill: none;
  stroke: #222;
}

.badge {
  fill: #5be0e6;
}

.badge-rim {
  fill: none;
  stroke: #5be0e6;
  stroke-width: 5;
  stroke-linecap: round;
  stroke-dasharray: 0 7.85;
}

.map text {
  fill: #111;
  font-size: 17px;
  font-weight: bold;
  text-anchor: middle;
}

.map text.small {
  font-size: 12px;
}

.floor-btn {
  position: absolute;
  right: 14px;
  bottom: 16px;
  width: 43px;
  height: 43px;
  border-radius: 50%;
  background: var(--cyan);
  color: #fff;
  font-size: 18px;
  font-weight: bold;
}

/* Details */
.details {
  padding: 24px 28px 30px;
  border-radius: 14px;
  background: #fff;
  box-shadow: var(--shadow);
}

.details h2 {
  margin-bottom: 26px;
  color: var(--cyan);
  font-size: 21px;
  font-weight: 600;
  line-height: 36px;
}

.detail-grid {
  display: grid;
  grid-template-columns: repeat(3, 1fr);
  gap: 15px;
}

.detail {
  display: flex;
  align-items: center;
  gap: 8px;
  height: 50px;
  padding: 0 4px 0 15px;
  border-radius: 22px;
  background: var(--panel);
}

.detail dt {
  font-size: 14px;
  font-weight: 500;
}

.detail dd {
  margin-right: auto;
  font-size: 16px;
  font-weight: 500;
}

/* Sidebar */
.sidebar {
  width: 259px;
  background: var(--cyan);
}

.logo {
  display: flex;
  flex-direction: column;
  align-items: center;
  width: 172px;
  height: 172px;
  margin: 22px 44px 0 0;
  padding-top: 15px;
  border-radius: 50%;
  background: #fff;
  color: #3f3f97;
  font-size: 11px;
  line-height: 19px;
  white-space: nowrap;
}

.profile {
  display: flex;
  align-items: center;
  gap: 14px;
  height: 80px;
  padding: 20px 22px 0 0;
  color: #fff;
  font-size: 14px;
  font-weight: 500;
}

.initials {
  width: 43px;
  height: 43px;
  border-radius: 50%;
  background: #fff;
  color: var(--cyan);
  line-height: 40px;
  text-align: center;
}

.menu {
  display: grid;
  grid-auto-rows: 1fr;
  min-height: 428px;
  padding: 7px 14px 6px 29px;
  background: var(--dark);
}

.menu a {
  display: flex;
  align-items: center;
  gap: 8px;
  border-bottom: 2px solid #fff;
  color: #fff;
  font-size: 14px;
  font-weight: 500;
  text-decoration: none;
}

.menu a:last-child {
  border-bottom: none;
}

.menu a.active {
  color: #ffa800;
}

.menu svg {
  fill: none;
  stroke: currentColor;
}

.menu .caret {
  margin: 0 auto 0 7px;
}

.watermark {
  position: absolute;
  right: 69px;
  bottom: 41px;
  width: 236px;
  color: rgba(165, 165, 165, 0.8);
  font-family: var(--ui);
  pointer-events: none;
}

.watermark p {
  font-size: 19px;
  line-height: 24px;
}

.watermark span {
  font-size: 14px;
  line-height: 20px;
  white-space: nowrap;
}

/* Taskbar */
.taskbar {
  display: flex;
  height: 30px;
  background: linear-gradient(90deg, #22363f, #1f3140 60%, #1a2440);
  color: #fff;
  font-family: var(--ui);
  font-size: 12px;
}

.taskbar > * {
  flex-shrink: 0;
}

.start {
  width: 36px;
}

.search {
  display: flex;
  align-items: center;
  gap: 11px;
  width: 258px;
  padding-left: 11px;
  border: 1px solid #bbb;
  background: #f1f1f1;
}

.search input {
  flex: 1;
  min-width: 0;
  border: none;
  background: none;
  font: 15px var(--ui);
}

.search input::placeholder {
  color: #444;
}

.task-icon {
  width: 34px;
}

.task-icon.view {
  width: 39px;
}

.task-icon.slim {
  width: 30px;
}

.task {
  justify-content: flex-start;
  gap: 4px;
  width: 60px;
  margin: 0 4px;
  padding-left: 3px;
  border-bottom: 2px solid #76b9ed;
  white-space: nowrap;
}

.task.current {
  width: 68px;
  margin: 0 1px;
  padding-left: 6px;
  background: #47575f;
}

.tray {
  display: flex;
  align-items: center;
  gap: 8px;
  margin-left: auto;
  padding-right: 24px;
  white-space: nowrap;
}

.weather {
  display: flex;
  align-items: center;
  gap: 6px;
  margin-right: 8px;
  font-size: 14px;
}

.lang {
  margin: 0 7px;
}

.clock {
  margin: 0 12px 0 7px;
}
```
